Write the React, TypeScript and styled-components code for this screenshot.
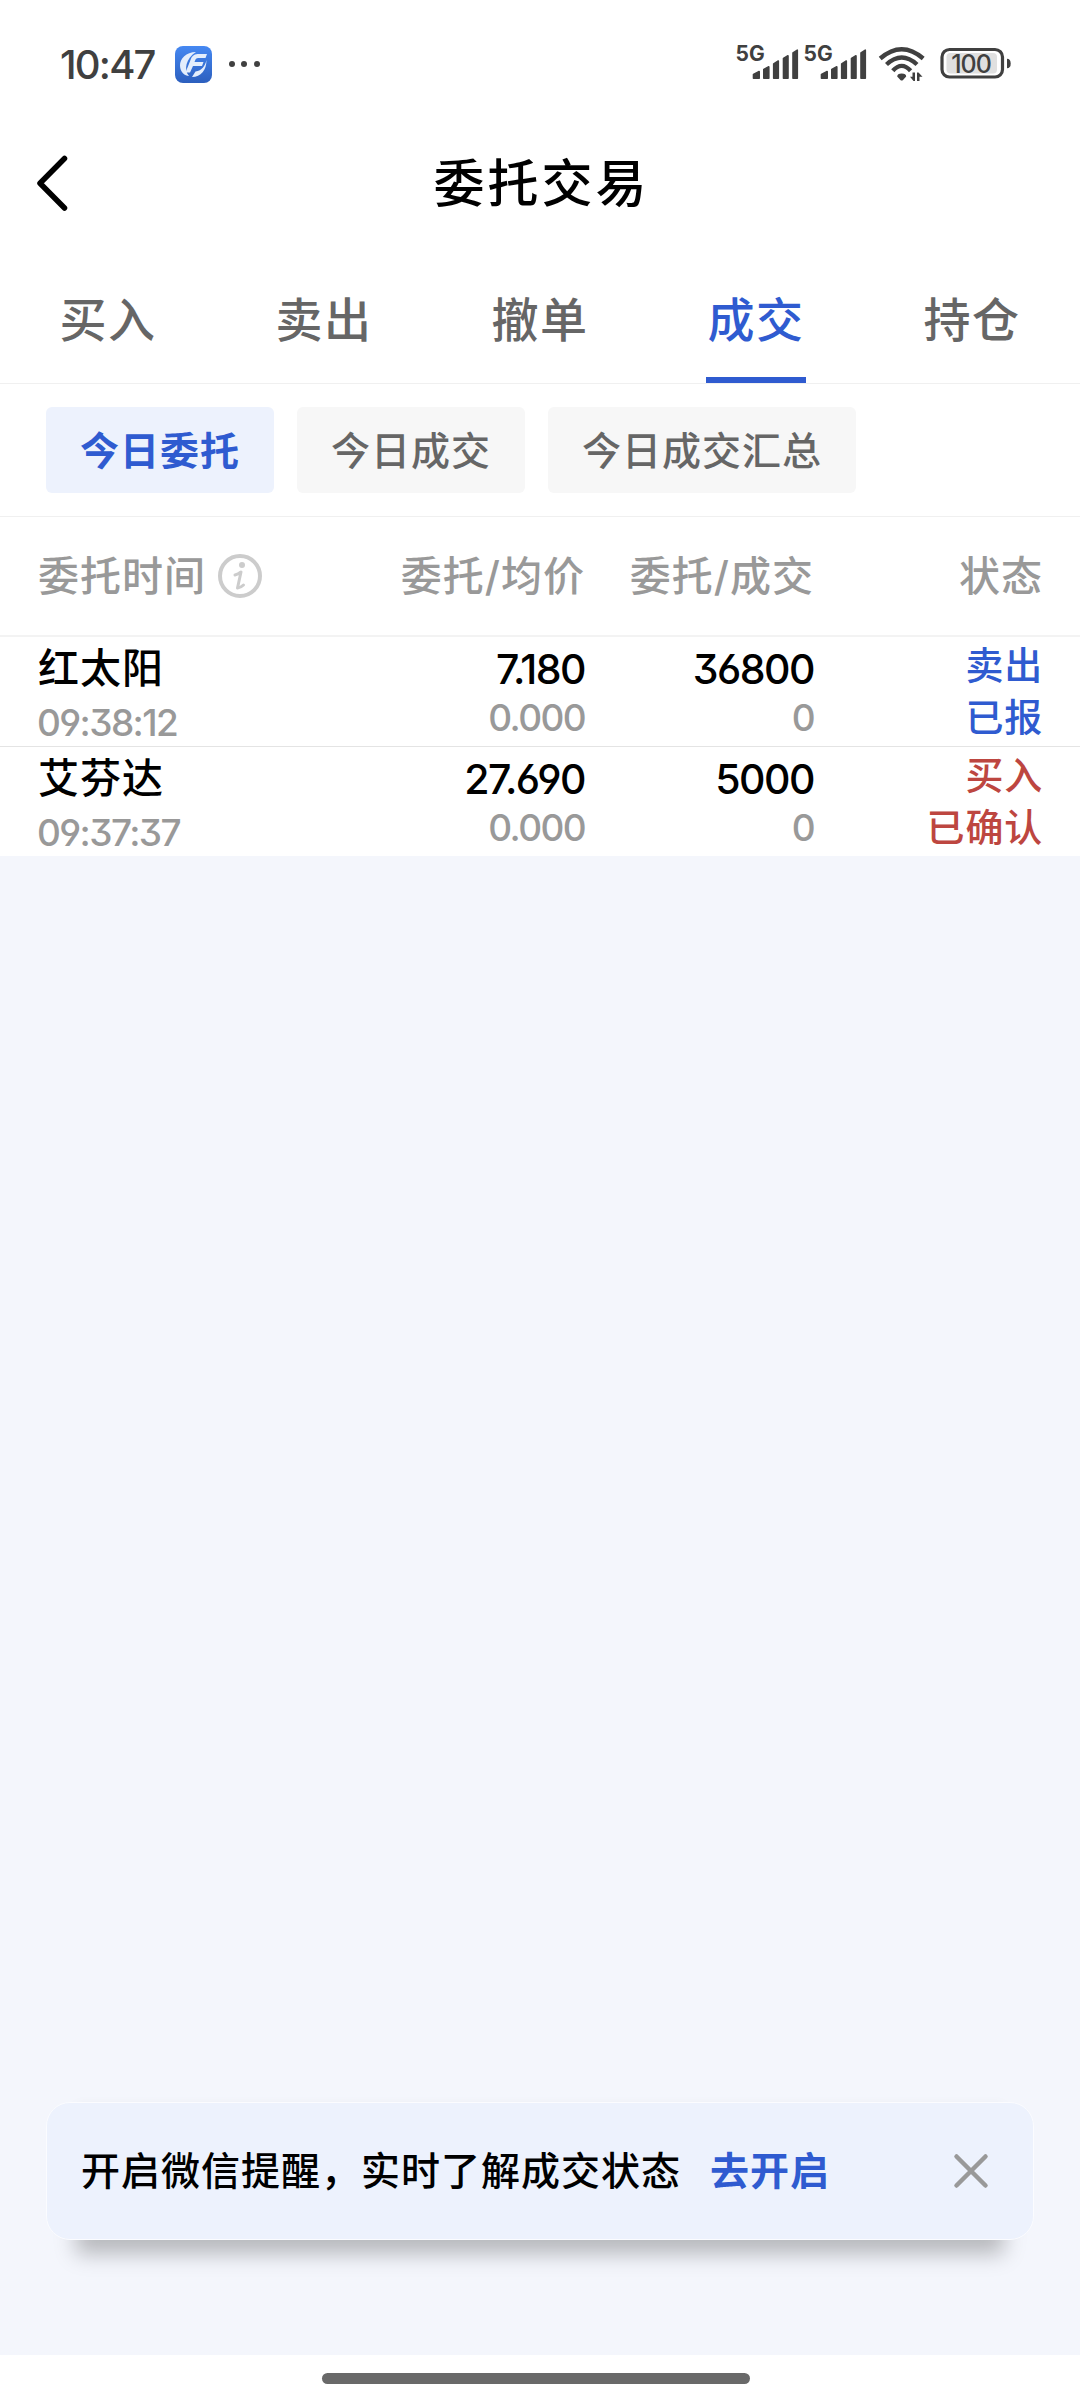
import React from "react";
import styled, { createGlobalStyle } from "styled-components";

const BLUE = "#2f5bd0";
const RED = "#bd4640";
const GREY = "#999999";

const Global = createGlobalStyle`
  * { box-sizing: border-box; }
  body { margin: 0; background: #fff; }
  button { border: 0; padding: 0; background: none; font: inherit; color: inherit; }
`;

const Screen = styled.div`
  width: 1080px;
  height: 2400px;
  display: flex;
  flex-direction: column;
  overflow: hidden;
  background: #f4f6fc;
  color: #000;
  font-family: Inter, "Noto Sans CJK SC", sans-serif;
  font-feature-settings: "cv09", "cv03", "cv04";
  font-weight: 500;
  white-space: nowrap;
`;

const StatusBar = styled.header`
  height: 128px;
  padding: 0 69px 0 60px;
  display: flex;
  align-items: center;
  background: #fff;
  color: #404040;
`;

const Clock = styled.span`
  width: 115px;
  font-size: 40px;
  letter-spacing: -1.8px;
`;

const StatusIcons = styled.svg`
  margin-left: auto;
`;

const NavBar = styled.div`
  height: 110px;
  padding: 0 36px;
  display: grid;
  grid-template-columns: 60px 1fr 60px;
  align-items: center;
  background: #fff;
`;

const Title = styled.h1`
  margin: 0;
  padding: 2px 0 0 3px;
  text-align: center;
  font-size: 51px;
  line-height: 60px;
  font-weight: 500;
  letter-spacing: 3px;
`;

const Tabs = styled.nav`
  height: 146px;
  display: grid;
  grid-template-columns: repeat(5, 1fr);
  background: #fff;
  border-bottom: 1px solid #f0f0f0;
`;

const Tab = styled.button<{ $active?: boolean }>`
  display: flex;
  flex-direction: column;
  align-items: center;
  justify-content: space-between;
  padding-top: 50px;
  font-size: 47px;
  line-height: 64px;
  letter-spacing: 1.4px;
  font-weight: 500;
  color: ${(p) => (p.$active ? BLUE : "#666")};
  &::after {
    content: "";
    width: 100px;
    height: 6px;
    background: ${(p) => (p.$active ? BLUE : "transparent")};
  }
`;

const Chips = styled.div`
  height: 133px;
  padding: 0 46px;
  display: flex;
  align-items: center;
  gap: 23px;
  background: #fff;
  border-bottom: 1px solid #f0f0f0;
`;

const Chip = styled.button<{ $active?: boolean }>`
  height: 86px;
  padding: 0 34px 5px;
  border-radius: 6px;
  font-size: 39px;
  letter-spacing: 1px;
  font-weight: ${(p) => (p.$active ? 700 : 500)};
  color: ${(p) => (p.$active ? BLUE : "#666")};
  background: ${(p) => (p.$active ? "#edf2fd" : "#f7f7f7")};
`;

const columns = `
  display: grid;
  grid-template-columns: 350px 197px 229px 1fr;
  padding: 0 37px 0 38px;
  background: #fff;
`;

const TableHead = styled.div`
  ${columns}
  height: 120px;
  align-items: center;
  border-bottom: 2px solid #f3f3f3;
  font-size: 41px;
  letter-spacing: 1px;
  color: ${GREY};
`;

const HeadCell = styled.div<{ $end?: boolean }>`
  display: flex;
  align-items: center;
  gap: 11px;
  justify-content: ${(p) => (p.$end ? "flex-end" : "flex-start")};
`;

const HeadLabel = styled.span`
  padding-bottom: 6px;
`;

const OrderRow = styled.div`
  ${columns}
  height: 110px;
  &:not(:last-child) {
    border-bottom: 1px solid #e4e4e4;
  }
  &:last-child {
    height: 109px;
  }
`;

const NameCell = styled.div`
  display: flex;
  flex-direction: column;
  padding-top: 4px;
`;

const Name = styled.span`
  font-size: 41px;
  line-height: 54px;
  letter-spacing: 1px;
`;

const Time = styled.span`
  margin-left: -1px;
  font-size: 37px;
  line-height: 55px;
  letter-spacing: -1.6px;
  color: ${GREY};
`;

const NumberCell = styled.div`
  display: flex;
  flex-direction: column;
  align-items: flex-end;
  padding-top: 5px;
`;

const Main = styled.span`
  font-size: 41px;
  line-height: 54px;
  letter-spacing: -1.5px;
`;

const Sub = styled.span`
  font-size: 37px;
  line-height: 44px;
  letter-spacing: -1.6px;
  color: ${GREY};
`;

const StateCell = styled.div<{ $color: string }>`
  display: flex;
  flex-direction: column;
  align-items: flex-end;
  padding-top: 2px;
  font-size: 38px;
  line-height: 52px;
  letter-spacing: 0.8px;
  color: ${(p) => p.$color};
`;

const Body = styled.main`
  flex: 1;
  display: flex;
  flex-direction: column;
  justify-content: flex-end;
  padding: 0 46px 115px;
`;

const Banner = styled.aside`
  height: 138px;
  padding: 0 44px 1px 34px;
  display: flex;
  align-items: center;
  border: 1px solid #fbfcff;
  border-radius: 24px;
  background: #edf2fd;
  box-shadow:
    0 44px 20px -30px rgba(0, 0, 0, 0.25),
    0 -26px 12px -30px rgba(0, 0, 0, 0.06);
  font-size: 39px;
  letter-spacing: 1px;
`;

const BannerText = styled.span`
  padding-bottom: 6px;
`;

const BannerLink = styled.a`
  margin-left: 29px;
  margin-right: auto;
  padding-bottom: 6px;
  font-weight: 700;
  color: ${BLUE};
`;

const HomeBar = styled.footer`
  height: 45px;
  padding-top: 18px;
  display: flex;
  justify-content: center;
  background: #fff;
  &::after {
    content: "";
    width: 428px;
    height: 11px;
    margin-right: 8px;
    border-radius: 6px;
    background: #696969;
  }
`;

const tabs = ["买入", "卖出", "撤单", "成交", "持仓"];
const chips = ["今日委托", "今日成交", "今日成交汇总"];
const orders = [
  { name: "红太阳", time: "09:38:12", price: "7.180", avg: "0.000", qty: "36800", done: "0", side: "卖出", state: "已报", color: BLUE },
  { name: "艾芬达", time: "09:37:37", price: "27.690", avg: "0.000", qty: "5000", done: "0", side: "买入", state: "已确认", color: RED },
];

const Signal = ({ x }: { x: number }) => (
  <g transform={`translate(${x} 0)`}>
    <text x="-1.500" y="25" fontSize="21" fontWeight="650" fontFamily="Inter, sans-serif">5G</text>
    <path
      stroke="#404040"
      strokeWidth="1.600"
      strokeLinejoin="round"
      d="M16.500 42.200V38.500L22.200 35.500V42.200ZM26.800 42.200V33.500L31.800 30.800V42.200ZM36.700 42.200V28L41.300 25V42.200ZM46.500 42.200V22.500L51 19.800V42.200ZM56 42.200V17L60.300 14.200V42.200Z"
    />
  </g>
);

export default function App() {
  return (
    <Screen>
      <Global />
      <StatusBar>
        <Clock>10:47</Clock>
        <svg width="90" height="37" viewBox="0 0 90 37">
          <defs>
            <linearGradient id="logo" x1="0" y1="0" x2="0" y2="1">
              <stop offset="0" stopColor="#4588f2" />
              <stop offset="1" stopColor="#2c5fbe" />
            </linearGradient>
          </defs>
          <rect width="37" height="37" rx="8" fill="url(#logo)" />
          <g fill="#e4eefc">
            <path d="M21 6C11 6 5 12.500 5 19.500C5 26 10 30 14 30C8.500 24 11 12 21 6Z" />
            <path d="M32 8H22.500Q17 8.500 15.500 14L10.500 26.500H15L18 20H27L28.500 16H19.500L20.500 13.500Q21 12 23 12H30.500Z" />
            <path d="M31.500 14C30 20 27 24.500 20.500 25.500L17 31C26 31 31.500 24 31.500 14Z" />
          </g>
          <g fill="#404040">
            <circle cx="57" cy="18" r="3" />
            <circle cx="69" cy="18" r="3" />
            <circle cx="82" cy="18" r="3" />
          </g>
        </svg>
        <StatusIcons width="276" height="56" viewBox="0 0 276 56" fill="#404040">
          <Signal x={2} />
          <Signal x={70} />
          <g fill="none" stroke="#404040" strokeWidth="4.400">
            <path d="M145.200 22.500Q166.700 4 188.200 22.500" />
            <path d="M151.500 28.500Q166.700 14.500 182 28.500" />
            <path d="M157.800 34.800Q166.700 25 175.600 34.800" />
          </g>
          <path d="M162.200 40.500Q162.200 37.500 166.700 37.500Q171.200 37.500 171.200 40.500L168 44Q166.700 45 165.400 44Z" />
          <path d="M175 40.800H177.500V36.500H180V45H178.500ZM182 45V36.500H183.500L187.500 40.800H184.500V45Z" />
          <rect x="207" y="13.500" width="60.500" height="27.500" rx="7.500" fill="none" stroke="#404040" strokeWidth="3.200" />
          <rect x="211.500" y="17" width="50.500" height="20.500" rx="4" fill="#e0e0e0" />
          <path d="M272 22.700Q275.700 22.700 275.700 27.500Q275.700 32.300 272 32.300Z" />
          <text x="236" y="36.800" fontSize="25" fontWeight="450" letterSpacing="-1" textAnchor="middle" fontFamily="Inter, sans-serif">100</text>
        </StatusIcons>
      </StatusBar>

      <NavBar>
        <svg width="40" height="60" viewBox="0 0 40 60" fill="none" stroke="#000" strokeWidth="5.500" strokeLinecap="round" strokeLinejoin="round">
          <path d="M28.500 5.500L4 30.300L28.500 55" />
        </svg>
        <Title>委托交易</Title>
      </NavBar>

      <Tabs>
        {tabs.map((t) => (
          <Tab key={t} $active={t === "成交"}>{t}</Tab>
        ))}
      </Tabs>

      <Chips>
        {chips.map((c) => (
          <Chip key={c} $active={c === "今日委托"}>{c}</Chip>
        ))}
      </Chips>

      <TableHead>
        <HeadCell>
          <HeadLabel>委托时间</HeadLabel>
          <svg width="46" height="46" viewBox="0 0 46 46" fill="none" stroke="#ccc" strokeWidth="4" strokeLinecap="round" strokeLinejoin="round">
            <circle cx="23" cy="23" r="20" />
            <circle cx="25" cy="12" r="3" fill="#ccc" stroke="none" />
            <path d="M18 22Q21 21.500 24 19L20.500 35Q24 34.500 26.500 32" strokeWidth="3" />
          </svg>
        </HeadCell>
        <HeadCell $end><HeadLabel>委托/均价</HeadLabel></HeadCell>
        <HeadCell $end><HeadLabel>委托/成交</HeadLabel></HeadCell>
        <HeadCell $end><HeadLabel>状态</HeadLabel></HeadCell>
      </TableHead>

      <div>
        {orders.map((o) => (
          <OrderRow key={o.time}>
            <NameCell>
              <Name>{o.name}</Name>
              <Time>{o.time}</Time>
            </NameCell>
            <NumberCell>
              <Main>{o.price}</Main>
              <Sub>{o.avg}</Sub>
            </NumberCell>
            <NumberCell>
              <Main>{o.qty}</Main>
              <Sub>{o.done}</Sub>
            </NumberCell>
            <StateCell $color={o.color}>
              <span>{o.side}</span>
              <span>{o.state}</span>
            </StateCell>
          </OrderRow>
        ))}
      </div>

      <Body>
        <Banner>
          <BannerText>开启微信提醒，实时了解成交状态</BannerText>
          <BannerLink>去开启</BannerLink>
          <svg width="36" height="36" viewBox="0 0 36 36" stroke="#999" strokeWidth="4.500" strokeLinecap="round">
            <path d="M3.500 3.500L32.500 32.500M32.500 3.500L3.500 32.500" />
          </svg>
        </Banner>
      </Body>
      <HomeBar />
    </Screen>
  );
}
